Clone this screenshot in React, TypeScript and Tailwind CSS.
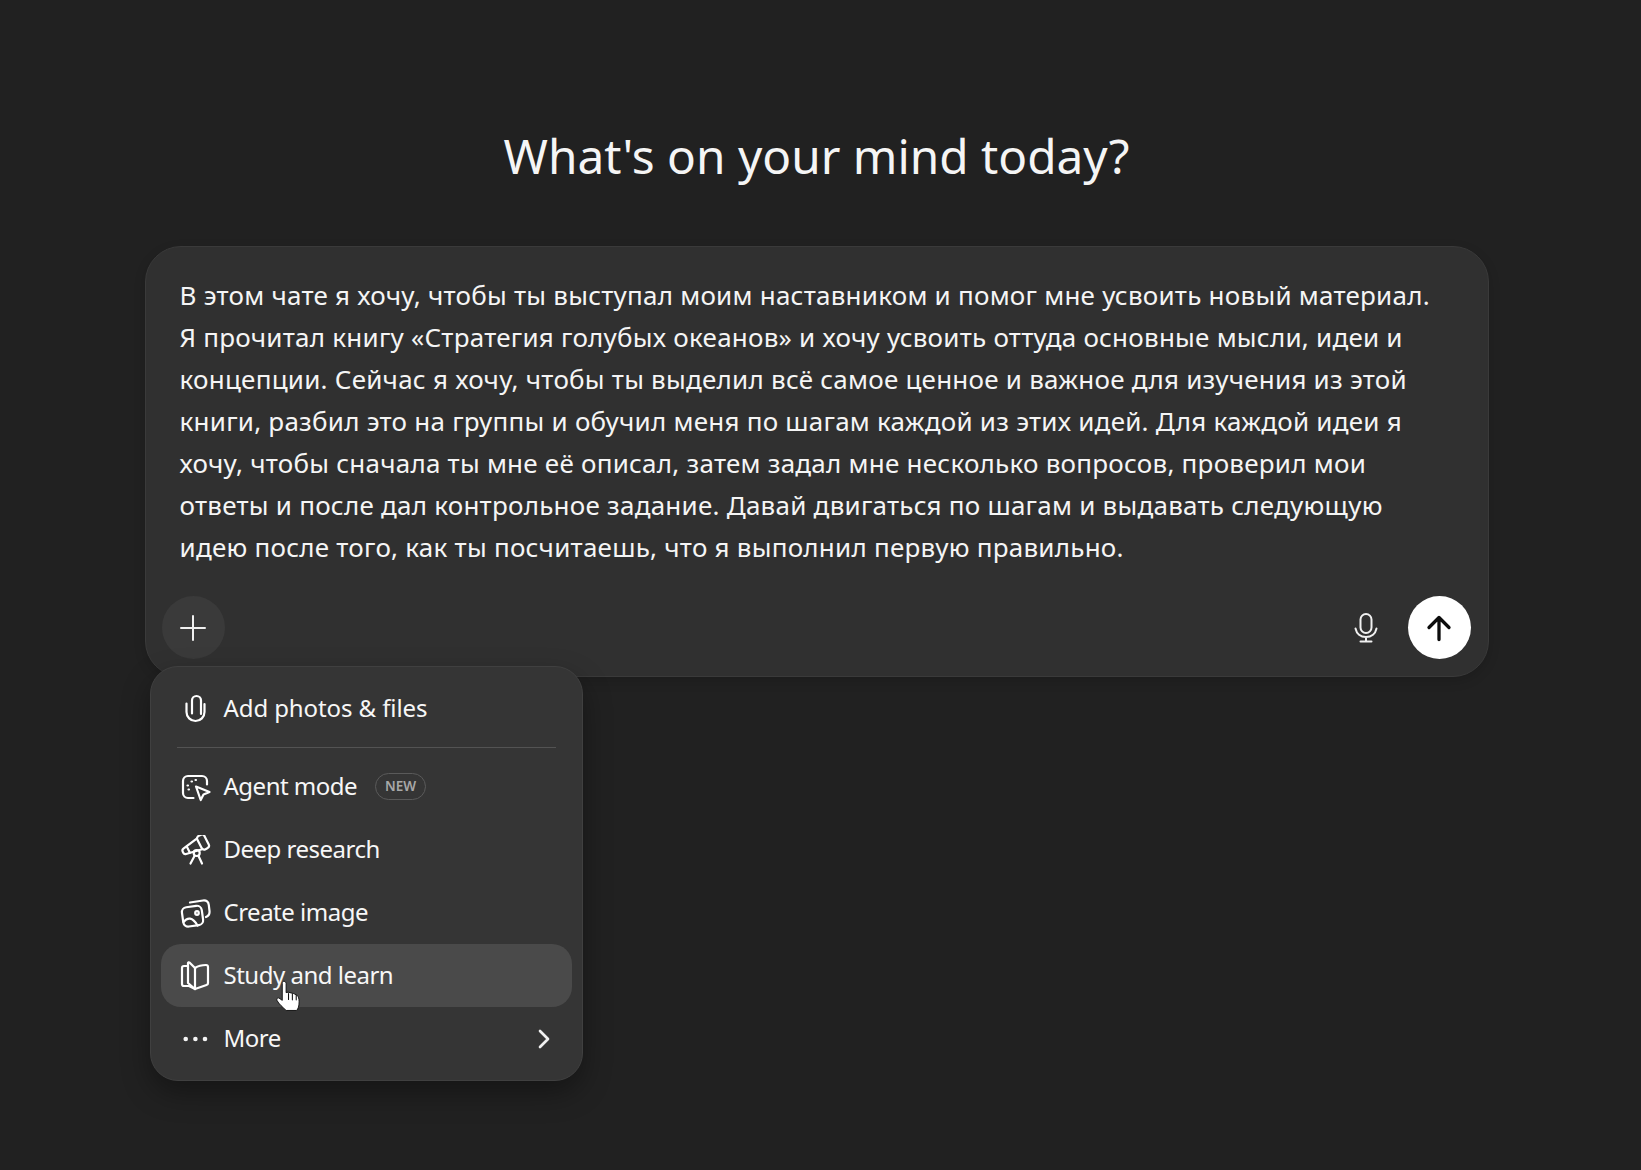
import { ChevronRight } from 'lucide-react';
import type { ReactNode } from 'react';

const lines = [
  'В этом чате я хочу, чтобы ты выступал моим наставником и помог мне усвоить новый материал.',
  'Я прочитал книгу «Стратегия голубых океанов» и хочу усвоить оттуда основные мысли, идеи и',
  'концепции. Сейчас я хочу, чтобы ты выделил всё самое ценное и важное для изучения из этой',
  'книги, разбил это на группы и обучил меня по шагам каждой из этих идей. Для каждой идеи я',
  'хочу, чтобы сначала ты мне её описал, затем задал мне несколько вопросов, проверил мои',
  'ответы и после дал контрольное задание. Давай двигаться по шагам и выдавать следующую',
  'идею после того, как ты посчитаешь, что я выполнил первую правильно.',
];

function Icon({ children }: { children: ReactNode }) {
  return (
    <svg width="31" height="30" viewBox="0 0 31 30" fill="none" stroke="currentColor" strokeWidth="2.200" strokeLinecap="round" strokeLinejoin="round" className="shrink-0">
      {children}
    </svg>
  );
}

function MenuRow({ icon, label, active, tight, children }: { icon: ReactNode; label: string; active?: boolean; tight?: boolean; children?: ReactNode }) {
  return (
    <div className={`flex h-[63px] items-center gap-[13px] rounded-[20px] px-[19px] ${active ? 'bg-[#4a4a4a]' : ''}`}>
      {icon}
      <span className={`mb-[2px] text-[24px] text-[#f7f7f7] ${tight ? 'tracking-[-0.5px]' : 'tracking-[-0.1px]'}`}>{label}</span>
      {children}
    </div>
  );
}

export default function App() {
  return (
    <div className="min-h-[1170px] bg-[#212121] pr-[8px] font-['Noto_Sans',sans-serif] text-white">
      <div className="mx-auto w-[1344px] pt-[119px]">
        <h1 className="h-[127px] text-center text-[47.750px] leading-[74px] text-[#f5f5f5]">What's on your mind today?</h1>

        <div className="relative rounded-[36px] border border-[#3a3a3a] bg-[#303030] shadow-[0_4px_12px_rgba(0,0,0,0.15)]">
          <div className="pl-[34px] pt-[27px] text-[26px] leading-[42px] tracking-[0.24px] text-[#f5f5f5]">
            {lines.map((l) => (
              <div key={l} className="whitespace-nowrap">{l}</div>
            ))}
          </div>
          <div className="flex items-center justify-between pb-[17px] pl-[16px] pr-[17px] pt-[28px]">
            <button className="flex h-[63px] w-[63px] items-center justify-center rounded-full bg-[#3a3a3a]">
              <svg width="28" height="28" viewBox="0 0 28 28" fill="none" stroke="#f0f0f0" strokeWidth="2" strokeLinecap="round"><path d="M14 2v24M2 14h24" /></svg>
            </button>
            <div className="flex items-center gap-[30px]">
              <svg width="24" height="30" viewBox="0 0 24 30" fill="none" stroke="#f0f0f0" strokeWidth="2" strokeLinecap="round">
                <rect x="6.500" y="1" width="11" height="19" rx="5.500" />
                <path d="M1.500 15.500c1 5 5 8.500 10.500 8.500s9.500-3.500 10.500-8.500M12 24v4.500M6.500 28.500h11" />
              </svg>
              <button className="flex h-[63px] w-[63px] items-center justify-center rounded-full bg-white">
                <svg width="28" height="28" viewBox="0 0 28 28" fill="none" stroke="#0d0d0d" strokeWidth="3.300" strokeLinecap="round" strokeLinejoin="round"><path d="M14 25.500V3.500M4 13.500 14 3.500l10 10" /></svg>
              </button>
            </div>
          </div>

          <div className="absolute left-[4px] top-[419px] w-[433px] rounded-[28px] border border-[#404040] bg-[#353535] p-[10px] shadow-[0_12px_28px_rgba(0,0,0,0.35)]">
            <MenuRow
              label="Add photos & files"
              icon={
                <Icon>
                  <path d="M6.500 9.500V18a9 9 0 0 0 18 0v-8" />
                  <path d="M12 19.500V6.500a4.500 4.500 0 0 1 9 0V20" />
                </Icon>
              }
            />
            <div className="mx-[16px] my-[7px] h-px bg-[#535353]" />
            <MenuRow
              tight
              label="Agent mode"
              icon={
                <Icon>
                  <path d="M13.500 26H8a5 5 0 0 1-5-5V9a5 5 0 0 1 5-5h14a5 5 0 0 1 5 5v3.500" />
                  <path d="M16 14.500 29.500 20l-6 2.500-2.800 5.500z" />
                  <path d="M7.500 13.500h.5M11.500 9.500h.5M15.500 8h.5M8.500 17.500h.5" />
                </Icon>
              }
            >
              <span className="ml-[5px] flex h-[27px] w-[51px] items-center justify-center rounded-full border border-[#5a5a5a] text-[13.500px] font-semibold text-[#a8a8a8]">NEW</span>
            </MenuRow>
            <MenuRow
              tight
              label="Deep research"
              icon={
                <Icon>
                  <g transform="rotate(-27 15 10)">
                    <path d="M19.500 5 3 8a2.500 2.500 0 0 0-2 2.500v1A2.500 2.500 0 0 0 3 14l16.500 3" />
                    <path d="M7 7.500v7" />
                    <rect x="19.500" y="3.500" width="8" height="15" rx="3" />
                  </g>
                  <circle cx="16.700" cy="18" r="3" />
                  <path d="m14.500 21-4 7.500M18.500 21l3.500 7.500" />
                </Icon>
              }
            />
            <MenuRow
              tight
              label="Create image"
              icon={
                <Icon>
                  <rect x="2.500" y="8.500" width="20" height="19.500" rx="5" transform="rotate(-8 12 18)" />
                  <path d="M10 4.500 23 2.500c3.500-.5 5.500 1.500 5.800 4.500l.7 6c.3 3-1 5-3.500 6" />
                  <path d="M3.500 24c4-5 9-5 14 3.500" />
                  <circle cx="17" cy="15" r="1.800" />
                </Icon>
              }
            />
            <MenuRow
              active
              tight
              label="Study and learn"
              icon={
                <Icon>
                  <path d="M15 7 9.500 1.500c-.5-.5-1.500-.2-1.500.5v20l7 6" />
                  <path d="M15 7c3-2 8-3 11-3a2 2 0 0 1 2 2v16a2 2 0 0 1-1.500 2L15 28z" />
                  <path d="M8 5H4a2 2 0 0 0-2 2v16a2 2 0 0 0 2 2h5l6 3" />
                </Icon>
              }
            />
            <MenuRow
              tight
              label="More"
              icon={
                <svg width="31" height="30" viewBox="0 0 31 30" fill="#f5f5f5" className="shrink-0">
                  <circle cx="5.700" cy="15" r="2.300" /><circle cx="15.400" cy="15" r="2.300" /><circle cx="25" cy="15" r="2.300" />
                </svg>
              }
            >
              <ChevronRight className="ml-auto mr-[-7px] text-[#f0f0f0]" size={32} strokeWidth={2} />
            </MenuRow>
          </div>

          {/* hand cursor */}
          <svg className="absolute left-[130px] top-[733px]" width="26" height="33" viewBox="0 0 27 34">
            <path d="M7 1.500c1.500-1 3.500 0 3.500 2V13l2-.5 2 .5 2 .5 2 .5 3 1.500c2 1.500 2.500 4 2.500 7 0 5-1 7-2.500 9H10.500C7 28 3 25 1 21c-.5-1.500.5-3 2-2.500l3.500 2.500V3.500c0-.8 0-1.500.5-2z" fill="#fff" stroke="#111" strokeWidth="1" strokeLinejoin="round" />
            <path d="M13 14v6M17 14.500v6M21 15.500v5" stroke="#111" strokeWidth="1.100" strokeLinecap="round" />
          </svg>
        </div>
      </div>
    </div>
  );
}
